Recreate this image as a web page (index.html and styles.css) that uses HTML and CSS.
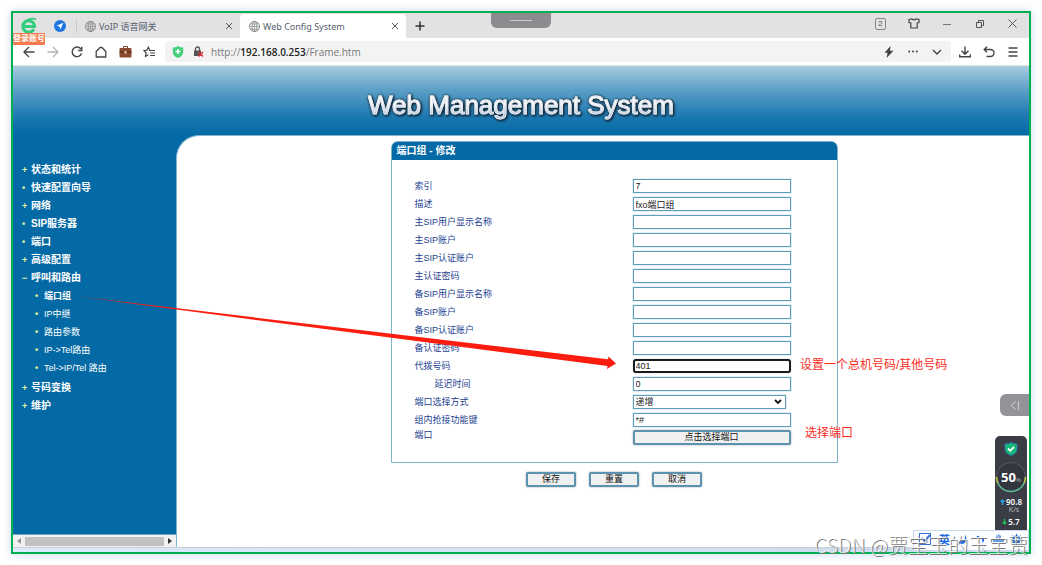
FILE: index.html
```html
<!DOCTYPE html>
<html lang="zh-CN">
<head>
<meta charset="utf-8">
<title>Web Config System</title>
<link rel="stylesheet" href="styles.css">
</head>
<body>
<div class="window">
  <header class="tabbar">
    <button class="brand" aria-label="浏览器"><svg width="18" height="18" viewBox="0 0 18 18" fill="none" stroke="#31cc7c"><path d="M4 9.500h10.500A5.800 5.800 0 1 0 13.800 12.300" stroke-width="3"/><path d="M2 8C5 3 12 0 16 2.500" stroke-width="1.800"/></svg></button>
    <button class="compass" aria-label="导航"><svg width="12" height="12" viewBox="0 0 12 12"><circle cx="6" cy="6" r="6" fill="#1b74e0"/><path d="M9.300 2.800 2.500 5.700l3 .8.900 3z" fill="#fff"/></svg></button>
    <nav class="tabs">
      <div class="tab">
        <svg width="11" height="11" viewBox="0 0 11 11" fill="none" stroke="#888"><circle cx="5.500" cy="5.500" r="5"/><ellipse cx="5.500" cy="5.500" rx="2.300" ry="5" stroke-width=".8"/><path d="M.5 5.500h10M1.300 3h8.400M1.300 8h8.400M5.500.5v10" stroke-width=".7"/></svg>
        <span class="tab-name">VoIP 语音网关</span>
        <button class="tab-close" aria-label="关闭"><svg width="8" height="8" viewBox="0 0 8 8" stroke="#555"><path d="m1 1 6 6M7 1 1 7"/></svg></button>
      </div>
      <div class="tab tab-active">
        <svg width="11" height="11" viewBox="0 0 11 11" fill="none" stroke="#888"><circle cx="5.500" cy="5.500" r="5"/><ellipse cx="5.500" cy="5.500" rx="2.300" ry="5" stroke-width=".8"/><path d="M.5 5.500h10M1.300 3h8.400M1.300 8h8.400M5.500.5v10" stroke-width=".7"/></svg>
        <span class="tab-name">Web Config System</span>
        <button class="tab-close" aria-label="关闭"><svg width="8" height="8" viewBox="0 0 8 8" stroke="#555"><path d="m1 1 6 6M7 1 1 7"/></svg></button>
      </div>
    </nav>
    <button class="new-tab" aria-label="新标签"><svg width="10" height="10" viewBox="0 0 10 10" stroke="#333" stroke-width="1.500"><path d="M5 .5v9M.5 5h9"/></svg></button>
    <div class="window-controls">
      <button><span class="tab-count">2</span></button>
      <button aria-label="皮肤"><svg width="12" height="11" viewBox="0 0 12 11" fill="none" stroke="#444" stroke-width="1.200"><path d="M1 1.500 4 1q2 1.600 4 0l3 .5v3L9.200 5v5H2.800V5L1 4.500z"/></svg></button>
      <button aria-label="最小化"><svg width="8" height="8" viewBox="0 0 8 8" stroke="#777"><path d="M0 4.500h8"/></svg></button>
      <button aria-label="还原"><svg width="8" height="8" viewBox="0 0 8 8" fill="none" stroke="#555"><path d="M.5 2.500h5v5h-5zM2.500 2.500v-2h5v5h-2"/></svg></button>
      <button aria-label="关闭窗口"><svg width="9" height="9" viewBox="0 0 9 9" stroke="#555"><path d="m.5.5 8 8M8.500.5l-8 8"/></svg></button>
    </div>
  </header>
  <div class="toolbar">
    <button class="tool" aria-label="后退"><svg width="12" height="12" viewBox="0 0 12 12" fill="none" stroke="#444" stroke-width="1.300"><path d="M11.500 6H1M6 1 1 6l5 5"/></svg></button>
    <button class="tool" aria-label="前进"><svg width="12" height="12" viewBox="0 0 12 12" fill="none" stroke="#b5b5b5" stroke-width="1.300"><path d="M.5 6H11M6 1l5 5-5 5"/></svg></button>
    <button class="tool" aria-label="刷新"><svg width="12" height="12" viewBox="0 0 12 12" fill="none" stroke="#444" stroke-width="1.400"><path d="M10.500 7.500A4.800 4.800 0 1 1 10 3.200"/><path d="M10.800.8v3.700H7.200"/></svg></button>
    <button class="tool" aria-label="主页"><svg width="12" height="12" viewBox="0 0 12 12" fill="none" stroke="#444" stroke-width="1.300"><path d="M1.200 5.500 5 1.500h2l3.800 4V11H1.200z" stroke-linejoin="round"/></svg></button>
    <button class="tool" aria-label="工具箱"><svg width="13" height="12" viewBox="0 0 13 12"><path d="M4.500 2.500v-2h4v2" fill="none" stroke="#7a4128"/><rect x=".5" y="2" width="12" height="9.500" rx="1" fill="#8a4b30"/><path d="M.5 6h12" stroke="#4b2516"/><rect x="5.500" y="5" width="2" height="2.500" fill="#efd29b"/></svg></button>
    <button class="tool" aria-label="收藏"><svg width="12" height="12" viewBox="0 0 12 12" fill="none" stroke="#444" stroke-width="1.200"><path d="m6.800 4.200-1.500-3-1.400 3L1 4.600l2.100 2.200-.6 3.500 2.900-1.500M6 4.500h6M7 7h5M7 9.500h5"/></svg></button>
    <div class="address">
      <span class="site-icon"><svg width="12" height="12" viewBox="0 0 12 12"><path d="M.8 1.500Q4 1.500 6 0q2 1.500 5.200 1.500V6q0 4-5.200 6Q.8 10 .8 6z" fill="#45d07a"/><path d="M6 3v5M3.500 5.500h5" stroke="#fff" stroke-width="1.500"/></svg></span>
      <span class="site-icon"><svg width="11" height="11" viewBox="0 0 11 11"><path d="M2.500 5V3a2 2 0 0 1 4 0v2" fill="none" stroke="#555" stroke-width="1.300"/><rect x="1" y="4.500" width="7" height="5.500" fill="#555"/><path d="m5.500 6 4.500 4.500M10 6l-4.500 4.500" stroke="#d9343c" stroke-width="1.500"/></svg></span>
      <span class="url">http://<b>192.168.0.253</b>/Frame.htm</span>
      <button class="tool" aria-label="极速"><svg width="10" height="12" viewBox="0 0 10 12" fill="#444"><path d="M6.500 0 .5 6.800h3L2.600 12 9.500 4.800H6z"/></svg></button>
      <button class="tool" aria-label="更多"><svg width="10" height="4" viewBox="0 0 10 4" fill="#444"><circle cx="1.200" cy="1.500" r="1"/><circle cx="5" cy="1.500" r="1"/><circle cx="8.800" cy="1.500" r="1"/></svg></button>
      <button class="tool" aria-label="展开"><svg width="10" height="6" viewBox="0 0 10 6" fill="none" stroke="#444" stroke-width="1.400"><path d="m1 1 4 4 4-4"/></svg></button>
    </div>
    <button class="tool" aria-label="下载"><svg width="12" height="12" viewBox="0 0 12 12" fill="none" stroke="#444" stroke-width="1.400"><path d="M6 .5v7.500M2.500 4.800 6 8.200l3.500-3.400M.7 8.500v2.300h10.600V8.500"/></svg></button>
    <button class="tool" aria-label="撤销"><svg width="12" height="12" viewBox="0 0 12 12" fill="none" stroke="#444" stroke-width="1.400"><path d="M1 3.500h6.500a3.500 3.500 0 0 1 0 7H3.500M4 .8 1.200 3.500 4 6.200"/></svg></button>
    <button class="tool" aria-label="菜单"><svg width="10" height="10" viewBox="0 0 10 10" stroke="#444" stroke-width="1.300"><path d="M.5 1h9M.5 5h9M.5 9h9"/></svg></button>
  </div>
  <div class="banner"><h1>Web Management System</h1></div>
  <div class="frame">
    <aside class="side">
      <ul class="menu">
        <li><a class="plus" href="#">状态和统计</a></li>
        <li><a class="dot" href="#">快速配置向导</a></li>
        <li><a class="plus" href="#">网络</a></li>
        <li><a class="dot" href="#">SIP服务器</a></li>
        <li><a class="dot" href="#">端口</a></li>
        <li><a class="plus" href="#">高级配置</a></li>
        <li><a class="minus" href="#">呼叫和路由</a>
          <ul class="submenu">
            <li><a class="dot current" href="#">端口组</a></li>
            <li><a class="dot" href="#">IP中继</a></li>
            <li><a class="dot" href="#">路由参数</a></li>
            <li><a class="dot" href="#">IP-&gt;Tel路由</a></li>
            <li><a class="dot" href="#">Tel-&gt;IP/Tel 路由</a></li>
          </ul>
        </li>
        <li><a class="plus" href="#">号码变换</a></li>
        <li><a class="plus" href="#">维护</a></li>
      </ul>
      <div class="scrollbar"><span class="arrow-left"></span><span class="thumb"></span><span class="arrow-right"></span></div>
    </aside>
    <main class="main">
      <form class="form">
        <section class="panel">
          <h2>端口组 - 修改</h2>
          <div class="fields">
            <div class="row"><label for="f1">索引</label><input id="f1" type="text" value="7"></div>
            <div class="row"><label for="f2">描述</label><input id="f2" type="text" value="fxo端口组"></div>
            <div class="row"><label for="f3">主SIP用户显示名称</label><input id="f3" type="text"></div>
            <div class="row"><label for="f4">主SIP账户</label><input id="f4" type="text"></div>
            <div class="row"><label for="f5">主SIP认证账户</label><input id="f5" type="text"></div>
            <div class="row"><label for="f6">主认证密码</label><input id="f6" type="text"></div>
            <div class="row"><label for="f7">备SIP用户显示名称</label><input id="f7" type="text"></div>
            <div class="row"><label for="f8">备SIP账户</label><input id="f8" type="text"></div>
            <div class="row"><label for="f9">备SIP认证账户</label><input id="f9" type="text"></div>
            <div class="row"><label for="f10">备认证密码</label><input id="f10" type="text"></div>
            <div class="row"><label for="f11">代拨号码</label><input id="f11" class="focused" type="text" value="401"></div>
            <div class="row"><label for="f12" class="indent">延迟时间</label><input id="f12" type="text" value="0"></div>
            <div class="row"><label for="f13">端口选择方式</label><div class="select-box"><select id="f13"><option>递增</option></select><svg width="8" height="6" viewBox="0 0 8 6" fill="none" stroke="#111" stroke-width="1.800"><path d="m1 1 3 3 3-3"/></svg></div></div>
            <div class="row"><label for="f14">组内抢接功能键</label><input id="f14" type="text" value="*#"></div>
            <div class="row row-port"><label for="f15">端口</label><button id="f15" class="btn" type="button">点击选择端口</button></div>
          </div>
        </section>
        <div class="actions">
          <button class="btn" type="button">保存</button>
          <button class="btn" type="button">重置</button>
          <button class="btn" type="button">取消</button>
        </div>
      </form>
    </main>
  </div>
  <div class="taskbar"></div>
</div>

<div class="handle"></div>
<span class="login-badge">登录账号</span>
<svg class="pointer" width="540" height="78" viewBox="0 0 540 78" fill="#fb1d0f"><path d="M0 2.300 532 65.300 532.500 62.500 540 69.500 531 75 531.500 72Z"/></svg>
<p class="note note-number">设置一个总机号码/其他号码</p>
<p class="note note-port">选择端口</p>
<button class="drawer" aria-label="展开侧栏"><svg width="9" height="9" viewBox="0 0 9 9" fill="none" stroke="#ccc"><path d="M6 .5 1 4.500l5 4M8.500 0v9"/></svg></button>
<div class="monitor">
  <svg width="14" height="14" viewBox="0 0 14 14"><path d="M1 2Q5 2 7 .5 9 2 13 2v5q0 4.500-6 6.500Q1 11.500 1 7z" fill="#17b877" stroke="#2d75ad"/><path d="m4 6.500 2.300 2.300L10 5" fill="none" stroke="#fff" stroke-width="1.800"/></svg>
  <div class="gauge"><svg width="32" height="32" viewBox="0 0 32 32" fill="none"><circle cx="16" cy="16" r="14.500" fill="#33363e" stroke="#555a63"/><path d="M1.500 16a14.500 14.500 0 0 0 29 0" stroke="#5bbd93" stroke-width="1.500"/><path d="M1.500 16q0 3 1.500 6M30.500 16q0 3-1.500 6" stroke="#c4b83a" stroke-width="1.500"/></svg><span><b>50</b><small>%</small></span></div>
  <div class="speed"><svg width="5" height="6" viewBox="0 0 5 6" fill="#2aa5ee"><path d="M2.500 0 5 3H3.200v3H1.800V3H0z"/></svg><b>90.8</b><small>K/s</small></div>
  <div class="speed"><svg width="5" height="6" viewBox="0 0 5 6" fill="#1fc45b"><path d="M2.500 6 0 3h1.800V0h1.400v3H5z"/></svg><b>5.7</b></div>
</div>
<div class="ime">
  <svg width="13" height="12" viewBox="0 0 13 12" fill="none" stroke="#3a6fd8"><rect x=".5" y=".5" width="11" height="11"/><path d="m3 5 2.500 3L11 2" stroke-width="2"/></svg>
  <span>英</span>
  <svg width="11" height="11" viewBox="0 0 11 11" fill="#2468e0"><path d="M8 0q2 8-7.500 7.500Q3 11 7 9.500 11.500 6.500 8 0"/></svg>
  <svg width="11" height="11" viewBox="0 0 11 11" fill="#2468e0"><circle cx="3" cy="3" r="1.300"/><path d="M7 5h2v2L7.500 9z"/></svg>
  <svg width="11" height="11" viewBox="0 0 11 11" fill="#6b9df0"><circle cx="5.500" cy="3" r="2.500"/><path d="M0 6h11v2H0z"/></svg>
  <svg width="11" height="11" viewBox="0 0 11 11" fill="none" stroke="#2468e0"><circle cx="5.500" cy="5.500" r="3" stroke-width="2"/><path d="M5.500 0v11M0 5.500h11M1.500 1.500l8 8M9.500 1.500l-8 8" stroke-dasharray="2 7"/></svg>
</div>
<p class="watermark">CSDN @贾宝玉的玉宝贾</p>
</body>
</html>
```

FILE: styles.css
```css
* { box-sizing: border-box; }
body {
  margin: 0;
  padding: 11px;
  position: relative;
  min-height: 100vh;
  background: #fff;
  font-family: "Liberation Sans", "Noto Sans CJK SC", sans-serif;
  font-size: 9px;
}
button, input, select { font: inherit; }
button { padding: 0; border: 0; background: none; }
h1, h2, p, ul { margin: 0; padding: 0; }
ul { list-style: none; }
a { color: inherit; text-decoration: none; }
svg { display: block; flex: none; }

.window {
  display: flex;
  flex-direction: column;
  min-height: calc(100vh - 22px);
  border: 2px solid #00b050;
  box-shadow: 0 0 9px #c9d8ee;
}

.tabbar {
  display: flex;
  align-items: center;
  height: 25px;
  background: #e2e2e2;
}
.brand { width: 32px; padding-left: 7px; }
.compass { width: 31px; padding-left: 9px; }
.tabs { display: flex; height: 25px; padding-top: 1px; }
.tab {
  display: flex;
  align-items: center;
  gap: 3px;
  width: 164px;
  padding: 0 7px 0 9px;
  color: #556070;
  font-family: "Noto Sans", "Noto Sans CJK SC", sans-serif;
}
.tab:first-child { background: linear-gradient(#c8c8c8, #c8c8c8) 0 5px / 1px 14px no-repeat; }
.tab-active {
  width: 166px;
  border-radius: 4px 4px 0 0;
  background: #fff;
}
.tab-name { flex: 1; white-space: nowrap; }
.new-tab { display: grid; place-items: center; width: 28px; height: 25px; }
.window-controls { display: flex; margin-left: auto; padding-bottom: 4px; }
.window-controls button { display: grid; place-items: center; width: 33px; height: 20px; }
.tab-count {
  width: 11px;
  border: 1px solid #888;
  border-radius: 2px;
  color: #555;
  font-size: 8px;
  line-height: 10px;
}

.toolbar {
  display: flex;
  align-items: center;
  height: 28px;
  padding: 0 4px;
  background: #fff;
  border-bottom: 1px solid #e4e4e4;
}
.tool { display: grid; place-items: center; width: 24px; height: 20px; }
.address {
  display: flex;
  flex: 1;
  align-items: center;
  height: 21px;
  margin: 0 2px 0 4px;
  padding: 0 2px 0 3px;
  border-radius: 3px;
  background: #f3f3f3;
}
.site-icon { display: grid; place-items: center; width: 20px; }
.url {
  flex: 1;
  padding-left: 3px;
  color: #777;
  font-family: "Open Sans", "Noto Sans", sans-serif;
  font-size: 10px;
}
.url b { color: #222; font-weight: 600; }

.banner {
  display: grid;
  place-items: center;
  height: 69px;
  padding: 8px 0 0 0;
  background: linear-gradient(#a9cde1, #5b9fc6 35%, #1a77b0 75%, #046aa5);
}
.banner h1 {
  color: transparent;
  background: linear-gradient(#fff 45%, #b4c6dd 80%);
  background-clip: text;
  font-size: 26px;
  font-weight: 400;
  line-height: 32px;
  -webkit-text-stroke: 1px #dfe6ef;
  filter: drop-shadow(0 0 1px #1d3444) drop-shadow(1px 1px 1px #0b2030);
}

.frame { display: flex; flex: 1; background: #046aa5; }
.side { display: flex; flex-direction: column; width: 163px; }
.menu {
  flex: 1;
  padding: 26px 0 0 9px;
  color: #fff;
  font-size: 10px;
  font-weight: 700;
  line-height: 18px;
}
.menu a { display: flex; align-items: center; }
.menu a::before {
  width: 9px;
  color: #e5f5a0;
  font-size: 9px;
  font-weight: 700;
}
.menu .plus::before { content: "+"; }
.menu .dot::before { content: "•"; }
.menu .minus::before { content: "−"; }
.submenu { padding: 0 0 2px 13px; font-size: 9px; font-weight: 400; }
.submenu .current { font-weight: 700; }
.scrollbar {
  display: flex;
  align-items: center;
  gap: 4px;
  height: 13px;
  padding: 0 4px;
  border-top: 1px solid #6da5c4;
  background: #f1f1f1;
}
.thumb { flex: 1; height: 9px; background: #c1c1c1; }
.arrow-left, .arrow-right { border: 3px solid transparent; }
.arrow-left { border-left-width: 0; border-right: 4px solid #999; }
.arrow-right { border-right-width: 0; border-left: 4px solid #333; }

.main {
  flex: 1;
  padding: 5px 0 16px 22px;
  border-top: 1px solid #7fb3d0;
  border-left: 1px solid #7fb3d0;
  border-top-left-radius: 23px;
  background: #fff;
}
.form { max-width: 447px; margin: 0 auto; }
.panel {
  border: 1px solid #7fb3c8;
  border-radius: 7px 7px 0 0;
}
.panel h2 {
  padding-left: 5px;
  border-radius: 5px 5px 0 0;
  background: #046aa5;
  color: #fff;
  font-size: 10px;
  line-height: 18px;
}
.fields { padding: 17px 46px 16px 23px; color: #1d3f8f; }
.row { display: flex; align-items: center; justify-content: space-between; height: 18px; }
.row label { padding-bottom: 1px; }
.row .indent { padding-left: 20px; }
.row input, .row .btn, .select-box { width: 158px; }
.row input, select {
  height: 14px;
  padding: 0 2px;
  border: 1px solid #5f9dbb;
  border-radius: 0;
  box-shadow: 0 0 1px #5f9dbb;
  background: #fff;
  color: #222;
}
.row .focused { border: 2px solid #1b1b1b; border-radius: 3px; padding: 0 1px; }
.select-box { display: flex; align-items: center; }
select { appearance: none; width: 153px; outline: 0; }
.select-box svg { margin-left: -12px; }
.row-port label { padding-bottom: 6px; }
.row-port { height: 17px; }
.btn {
  height: 15px;
  border: 2px solid #5b93b0;
  border-radius: 2px;
  box-shadow: 0 0 2px #999;
  background: #f0f0f0;
  color: #111;
  line-height: 11px;
}
.actions { display: flex; justify-content: center; gap: 13px; padding-top: 9px; }
.actions .btn { width: 50px; }
.taskbar { height: 5px; background: linear-gradient(90deg, #dcebfa, #cbd9ec); border-top: 1px solid #c8ced6; }

.handle {
  position: absolute;
  top: 13px;
  left: 491px;
  display: grid;
  place-items: center;
  width: 60px;
  height: 15px;
  border-radius: 0 0 6px 6px;
  background: #8b8c90;
}
.handle::before { content: ""; width: 22px; height: 1px; background: #ccc; }
.login-badge {
  position: absolute;
  top: 33px;
  left: 13px;
  border-radius: 1px;
  background: #f57a50;
  color: #fff;
  font-size: 8px;
  font-weight: 700;
  line-height: 12px;
}
.pointer { position: absolute; top: 294px; left: 76px; }
.note { position: absolute; color: #fb2b1e; font-size: 12px; line-height: 18px; white-space: nowrap; }
.note-number { top: 356px; left: 800px; }
.note-port { top: 424px; left: 805px; }
.drawer {
  position: absolute;
  top: 394px;
  right: 13px;
  display: grid;
  place-items: center;
  width: 29px;
  height: 22px;
  border-radius: 6px 0 0 6px;
  background: #929497;
}
.monitor {
  position: absolute;
  top: 436px;
  right: 15px;
  display: flex;
  flex-direction: column;
  align-items: center;
  width: 32px;
  height: 96px;
  padding-top: 6px;
  border-radius: 5px 5px 0 0;
  background: #3a3d46;
  color: #fff;
  font-family: "Noto Sans", sans-serif;
}
.gauge { display: grid; place-items: center; margin-top: 5px; }
.gauge > * { grid-area: 1 / 1; }
.gauge b { font-size: 13px; }
.gauge small { font-size: 6px; color: #aaa; }
.speed {
  display: grid;
  grid-template-columns: 5px auto;
  align-items: center;
  column-gap: 1px;
  padding-top: 4px;
  line-height: 9px;
}
.speed b { font-size: 8px; font-weight: 600; }
.speed small { grid-column: 2; color: #bbb; font-size: 7px; line-height: 7px; text-align: center; }
.ime {
  position: absolute;
  right: 13px;
  bottom: 14px;
  display: flex;
  align-items: center;
  justify-content: space-between;
  width: 116px;
  height: 21px;
  padding: 0 6px 3px 5px;
  border: 1px solid #c9d8ee;
  background: #fbfdff;
  color: #2468e0;
  font-size: 11px;
  font-weight: 700;
}
.watermark {
  position: absolute;
  right: 14px;
  bottom: 5px;
  color: rgba(255, 255, 255, 0.75);
  font-family: "Noto Sans CJK SC", sans-serif;
  font-size: 20px;
  font-weight: 300;
  line-height: 30px;
  text-shadow: 1px 1px 0 #777;
  white-space: nowrap;
}
```
